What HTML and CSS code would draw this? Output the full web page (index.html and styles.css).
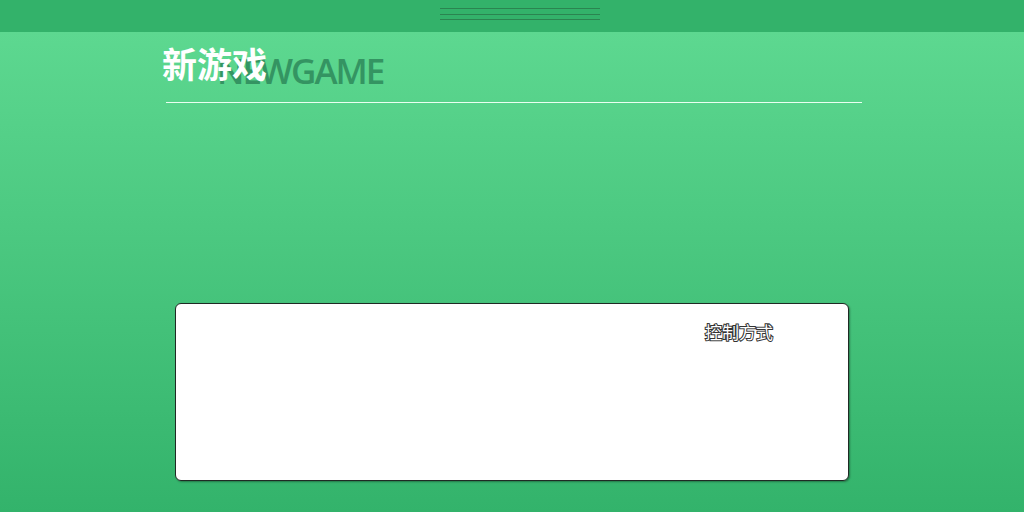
FILE: index.html
```html
<!DOCTYPE html>
<html lang="zh">
<head>
<meta charset="utf-8">
<link rel="stylesheet" href="styles.css">
</head>
<body>
<div class="topbar">
  <div class="handle"><span></span><span></span><span></span></div>
</div>
<main class="page">
  <header class="head">
    <h1 class="title"><span class="en">NEWGAME</span><span class="cn">新游戏</span></h1>
  </header>
  <section class="card">
    <div class="card-label">控制方式</div>
  </section>
</main>
</body>
</html>
```
FILE: styles.css
```css
* { box-sizing: border-box; }
html, body { margin: 0; padding: 0; }
body {
  width: 1024px;
  height: 512px;
  overflow: hidden;
  font-family: "Noto Sans", "Noto Sans CJK SC", sans-serif;
  background: linear-gradient(to bottom, #5dd890 32px, #33b36b 100%);
}
.topbar {
  height: 32px;
  background: #33b26a;
  display: flex;
  justify-content: center;
  padding: 8px 0 0 16px;
}
.handle {
  width: 160px;
  display: flex;
  flex-direction: column;
}
.handle span {
  display: block;
  height: 1px;
  background: #2b8450;
}
.handle span:nth-child(2) { margin-top: 5px; }
.handle span:nth-child(3) { margin-top: 4px; }
.page {
  width: 696px;
  margin-left: 166px;
}
.head {
  height: 71px;
  border-bottom: 1px solid #eafff1;
}
.title {
  margin: 0;
  position: relative;
  height: 70px;
}
.cn {
  position: absolute;
  left: -4px;
  top: 6px;
  font-family: "Noto Sans CJK SC", sans-serif;
  font-size: 35px;
  font-weight: 700;
  color: #ffffff;
  line-height: 50px;
}
.en {
  position: absolute;
  left: 51px;
  top: 15px;
  font-family: "Open Sans", sans-serif;
  font-size: 35px;
  font-weight: 600;
  color: #349462;
  letter-spacing: -2px;
  line-height: 48px;
}
.card {
  margin: 200px 0 0 9px;
  width: 674px;
  height: 178px;
  background: #ffffff;
  border: 1px solid #1f2a24;
  border-radius: 6px;
  box-shadow: 1px 1px 2px rgba(0,0,0,0.35);
  display: flex;
  justify-content: flex-end;
  padding: 16px 75px 0 0;
  align-items: flex-start;
}
.card-label {
  font-family: "Noto Sans CJK SC", sans-serif;
  font-size: 17px;
  line-height: 24px;
  color: #ffffff;
  -webkit-text-stroke: 2px #333333;
  paint-order: stroke fill;
}
```
